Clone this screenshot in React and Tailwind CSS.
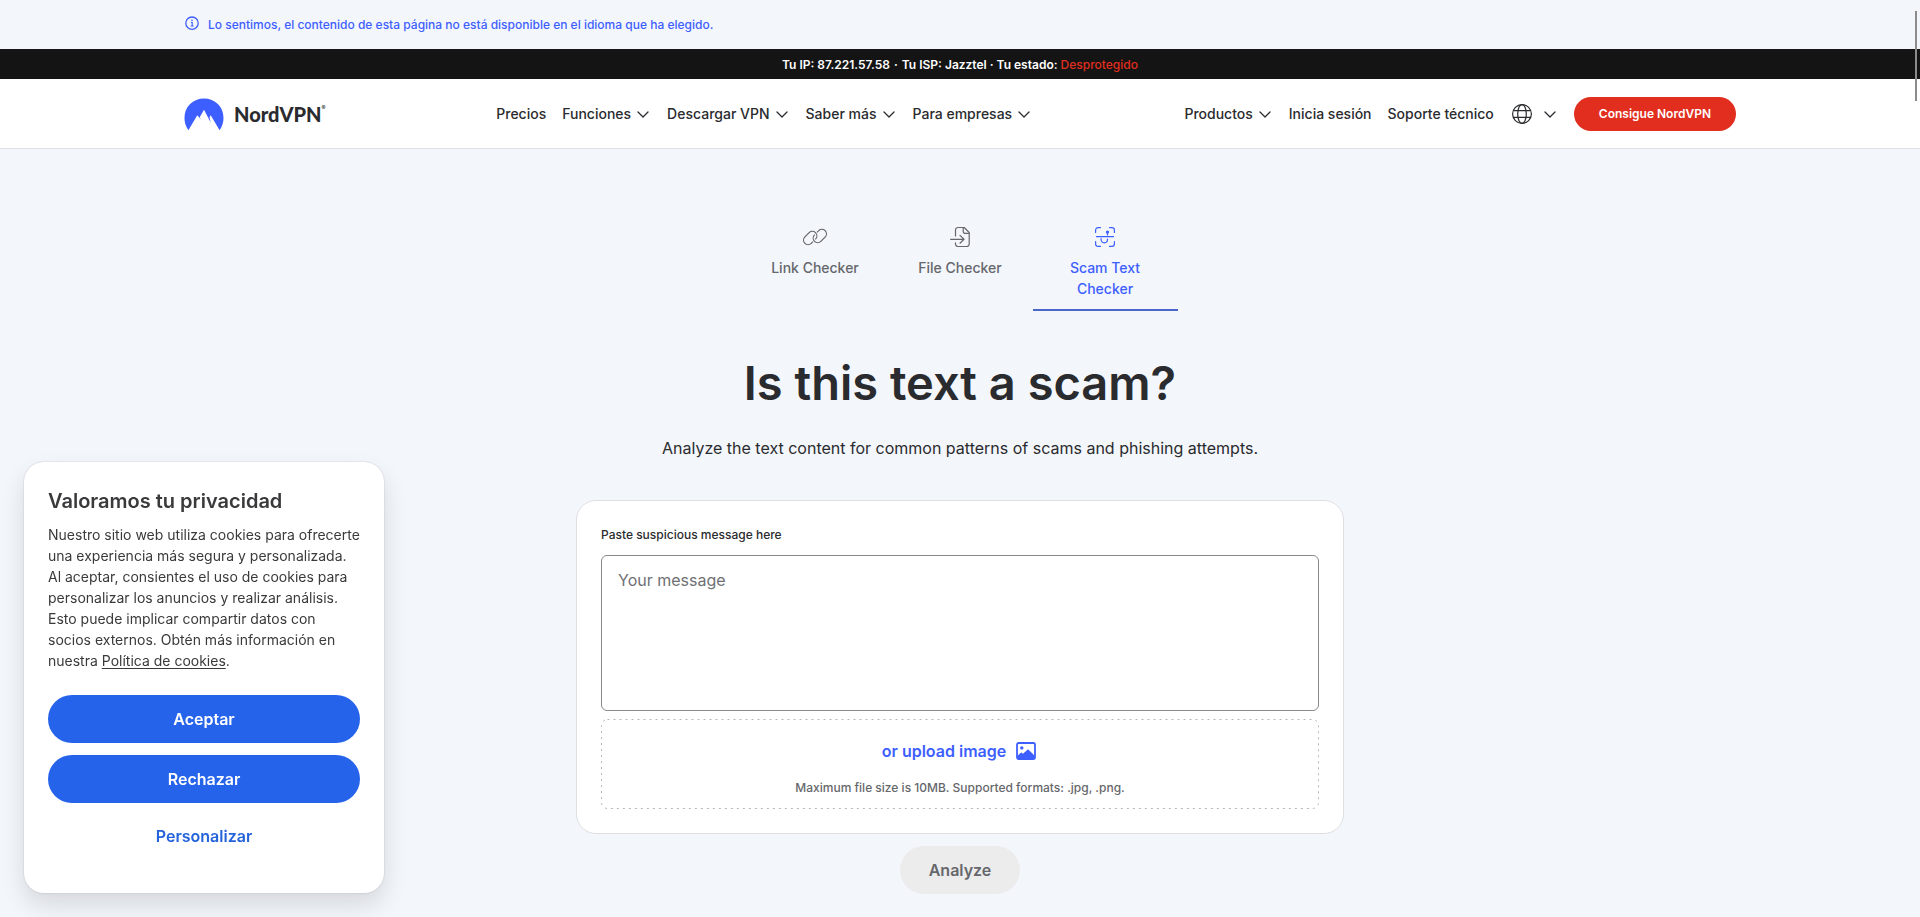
import React, { useState } from 'react';

const NAV_LINKS = [
  { label: 'Precios' },
  { label: 'Funciones', menu: true },
  { label: 'Descargar VPN', menu: true },
  { label: 'Saber más', menu: true },
  { label: 'Para empresas', menu: true },
];

const ACCOUNT_LINKS = [
  { label: 'Productos', menu: true },
  { label: 'Inicia sesión' },
  { label: 'Soporte técnico' },
];

const Chevron = () => (
  <svg className="h-4 w-4 shrink-0" viewBox="0 0 16 16" fill="none" stroke="currentColor" strokeWidth="1.3" strokeLinecap="round" strokeLinejoin="round" aria-hidden="true">
    <path d="M3 6l5 5 5-5" />
  </svg>
);

const InfoIcon = () => (
  <svg className="h-4 w-4 shrink-0" viewBox="0 0 16 16" fill="none" stroke="currentColor" aria-hidden="true">
    <circle cx="8" cy="7.2" r="6.2" strokeWidth="1.3" />
    <path d="M6.9 6.5h1.3v3.4M6.7 10h2.9" strokeWidth="1.1" />
    <circle cx="8" cy="4.4" r=".8" fill="currentColor" stroke="none" />
  </svg>
);

const GlobeIcon = () => (
  <svg className="h-6 w-6" viewBox="0 0 24 24" fill="none" stroke="currentColor" strokeWidth="1.2" aria-hidden="true">
    <circle cx="12" cy="12" r="9.4" />
    <ellipse cx="12" cy="12" rx="4.3" ry="9.4" />
    <path d="M3.3 8.7h17.4M3.3 15.3h17.4" />
  </svg>
);

const LinkIcon = () => (
  <svg className="h-6 w-6" viewBox="0 0 24 24" fill="none" stroke="currentColor" strokeWidth="1.2" aria-hidden="true">
    <rect x="-7.5" y="-4.5" width="15" height="9" rx="4.5" transform="translate(7.2 13) rotate(-45)" pathLength="100" strokeDasharray="51 8 41 0" />
    <rect x="-7.5" y="-4.5" width="15" height="9" rx="4.5" transform="translate(16.8 11) rotate(-45)" pathLength="100" strokeDasharray="1 8 91 0" />
  </svg>
);

const FileIcon = () => (
  <svg className="h-6 w-6" viewBox="0 0 24 24" fill="none" stroke="currentColor" strokeWidth="1.2" strokeLinecap="round" strokeLinejoin="round" aria-hidden="true">
    <path d="M7.5 11V5a2.5 2.5 0 0 1 2.5-2.5h6.2l5 5V19a2.5 2.5 0 0 1-2.5 2.5H10A2.5 2.5 0 0 1 7.5 19v-1.2" />
    <path d="M15.2 2.8v3.4a2.2 2.2 0 0 0 2.2 2.2h3.6" />
    <path d="M2.6 14.3h13M12 10.4l4 3.9-4 3.9" />
  </svg>
);

const ScamTextIcon = () => (
  <svg className="h-6 w-6" viewBox="0 0 24 24" fill="none" stroke="currentColor" strokeWidth="1.2" strokeLinecap="round" strokeLinejoin="round" aria-hidden="true">
    <path d="M2.6 7.5V5a2.4 2.4 0 0 1 2.4-2.4h2.5M16.5 2.6H19A2.4 2.4 0 0 1 21.4 5v2.5M21.4 16.5V19a2.4 2.4 0 0 1-2.4 2.4h-2.5M7.5 21.4H5A2.4 2.4 0 0 1 2.6 19v-2.5" />
    <path d="M3.5 11.7h17" />
    <path d="M14.5 8.2v1.8M14.5 14v.6a3.2 3.2 0 0 1-6.4 0V13.5" />
    <circle cx="14.5" cy="7" r="1" fill="currentColor" />
  </svg>
);

const ImageIcon = () => (
  <svg className="h-6 w-6" viewBox="0 0 24 24" fill="none" aria-hidden="true">
    <rect x="3" y="4" width="18" height="16" rx="1.8" stroke="currentColor" strokeWidth="1.8" />
    <circle cx="7.8" cy="8.9" r="1.7" fill="currentColor" />
    <path d="M3.5 19.5v-2.7l3.7-3.4 1.8 1.4 5-4.6 6.500 6.400v2.900z" fill="currentColor" />
  </svg>
);

const Logo = () => (
  <a href="#" className="flex w-40 items-center gap-2.5 text-[#2a2b2e]" aria-label="NordVPN">
    <svg className="h-9 w-10 shrink-0" viewBox="0 0 40 36" fill="#3e5fff" aria-hidden="true">
      <path d="M4.400 34.200A20 20 0 0 1 .5 22C.5 10.500 9 2.500 20 2.500s19.500 8 19.500 19.500c0 4.700-1.500 8.900-3.900 12.200L26.700 19.300l-1.200 2 1.200 5.200L20 13.800l-4.300 7.500 1.200 2.200-3.600-4.200z" />
    </svg>
    <span className="flex items-start">
      <span className="font-['Lato',sans-serif] text-xl leading-6 font-black">NordVPN</span>
      <span className="text-[6px] leading-3">®</span>
    </span>
  </a>
);

const TABS = [
  { id: 'link', label: 'Link Checker', Icon: LinkIcon },
  { id: 'file', label: 'File Checker', Icon: FileIcon },
  { id: 'text', label: 'Scam Text Checker', Icon: ScamTextIcon },
];

const NavItem = ({ label, menu }) => {
  if (menu) {
    return (
      <button type="button" className="flex items-center gap-1 whitespace-nowrap">
        {label}
        <Chevron />
      </button>
    );
  }
  return <a href="#" className="whitespace-nowrap">{label}</a>;
};

const Header = () => (
  <header>
    <div className="text-[#3e5fff]">
      <div className="mx-auto flex h-[49px] max-w-[1600px] gap-2 px-6 pt-4">
        <InfoIcon />
        <p className="text-xs leading-[18px] font-medium">
          Lo sentimos, el contenido de esta página no está disponible en el idioma que ha elegido.
        </p>
      </div>
    </div>

    <div className="bg-[#141414] pt-[7px] pb-[5px] text-center text-xs leading-[18px] font-semibold text-white">
      Tu IP: 87.221.57.58 <span className="mx-px">·</span> Tu ISP: Jazztel <span>·</span> Tu estado:{' '}
      <span className="font-medium text-[#e12e1f]">Desprotegido</span>
    </div>

    <div className="border-b border-[#dedfe3] bg-white">
      <div className="mx-auto flex h-[69px] max-w-[1600px] items-center justify-between px-6 text-sm font-medium text-[#2a2b2e]">
        <Logo />
        <nav className="flex items-center gap-4" aria-label="Principal">
          {NAV_LINKS.map((link) => (
            <NavItem key={link.label} {...link} />
          ))}
        </nav>
        <div className="flex items-center gap-4">
          {ACCOUNT_LINKS.map((link) => (
            <NavItem key={link.label} {...link} />
          ))}
          <button type="button" className="flex items-center gap-2" aria-label="Idioma">
            <GlobeIcon />
            <Chevron />
          </button>
          <button type="button" className="rounded-full bg-[#e12e1f] px-[25px] py-2 text-xs leading-[18px] font-semibold text-white">
            Consigue NordVPN
          </button>
        </div>
      </div>
    </div>
  </header>
);

const CookieBanner = () => (
  <aside className="fixed bottom-6 left-6 w-[360px] rounded-[20px] bg-white px-6 pt-6 pb-[33px] text-[#3a3a3c] shadow-[0_0_2px_rgba(0,0,0,0.2),0_12px_24px_rgba(0,0,0,0.12)]">
    <h2 className="text-xl leading-[30px] font-semibold">Valoramos tu privacidad</h2>
    <p className="mt-2 text-sm leading-[21px]">
      Nuestro sitio web utiliza cookies para ofrecerte una experiencia más segura y personalizada. Al aceptar,
      consientes el uso de cookies para personalizar los anuncios y realizar análisis. Esto puede implicar
      compartir datos con socios externos. Obtén más información en nuestra{' '}
      <a href="#" className="underline underline-offset-2">Política de cookies</a>.
    </p>
    <div className="mt-6 flex flex-col gap-3">
      <button type="button" className="h-12 rounded-full bg-[#2563eb] font-semibold text-white">Aceptar</button>
      <button type="button" className="h-12 rounded-full bg-[#2563eb] font-semibold text-white">Rechazar</button>
    </div>
    <button type="button" className="mt-[9px] h-12 w-full font-semibold text-[#2563db]">Personalizar</button>
  </aside>
);

const App = () => {
  const [activeTab, setActiveTab] = useState('text');
  const [message, setMessage] = useState('');

  return (
    <div className="min-h-screen bg-[#f3f6fb] font-['Inter',sans-serif] text-[#2a2b2e]">
      <Header />

      <main className="flex flex-col items-center">
        <div className="mt-16 flex" role="tablist">
          {TABS.map(({ id, label, Icon }) => (
            <button
              key={id}
              type="button"
              role="tab"
              aria-selected={activeTab === id}
              onClick={() => setActiveTab(id)}
              className={`flex w-[145px] flex-col items-center border-b-2 px-6 pt-3 pb-2.5 text-sm leading-[21px] font-medium ${
                activeTab === id ? 'border-[#4a66c9] text-[#3e5fff]' : 'border-transparent text-[#66676b]'
              }`}
            >
              <Icon />
              <span className="mt-2">{label}</span>
            </button>
          ))}
        </div>

        <h1 className="mt-10 text-[47px] leading-[64px] font-semibold">Is this text a scam?</h1>
        <p className="mt-[21px] leading-6">
          Analyze the text content for common patterns of scams and phishing attempts.
        </p>

        <form className="mt-10 flex w-full flex-col items-center" onSubmit={(e) => e.preventDefault()}>
          <div className="w-full max-w-[768px] rounded-[20px] border border-[#dedfe3] bg-white p-6">
            <label htmlFor="message" className="block text-xs leading-5 font-medium">
              Paste suspicious message here
            </label>
            <textarea
              id="message"
              value={message}
              onChange={(e) => setMessage(e.target.value)}
              placeholder="Your message"
              className="mt-2.5 block h-[156px] w-full resize-none rounded-md border border-[#87888c] px-4 py-3 leading-6 placeholder:text-[#6f7074]"
            />
            <div className="relative mt-2 flex flex-col items-center pt-5 pb-3">
              {/* CSS dashes are too tight for this outline */}
              <svg className="pointer-events-none absolute inset-0 h-full w-full" fill="none" aria-hidden="true">
                <rect x=".5" y=".5" className="h-[calc(100%-1px)] w-[calc(100%-1px)]" rx="6" stroke="#b6b7bb" strokeDasharray="2 4" />
              </svg>
              <button type="button" className="flex items-center gap-2 leading-6 font-semibold text-[#3e5fff]">
                or upload image
                <ImageIcon />
              </button>
              <p className="mt-4 text-xs leading-[18px] font-medium text-[#66676b]">
                Maximum file size is 10MB. Supported formats: .jpg, .png.
              </p>
            </div>
          </div>
          <button type="submit" disabled={!message} className="mt-3 h-12 w-[120px] rounded-full bg-[#ececec] font-semibold text-[#66676b]">
            Analyze
          </button>
        </form>
      </main>

      <CookieBanner />

      {/* thin overlay scroll indicator */}
      <div className="fixed top-[11px] right-[3px] h-[90px] w-0.5 bg-[#8c8c8c]" />
    </div>
  );
};

export default App;
